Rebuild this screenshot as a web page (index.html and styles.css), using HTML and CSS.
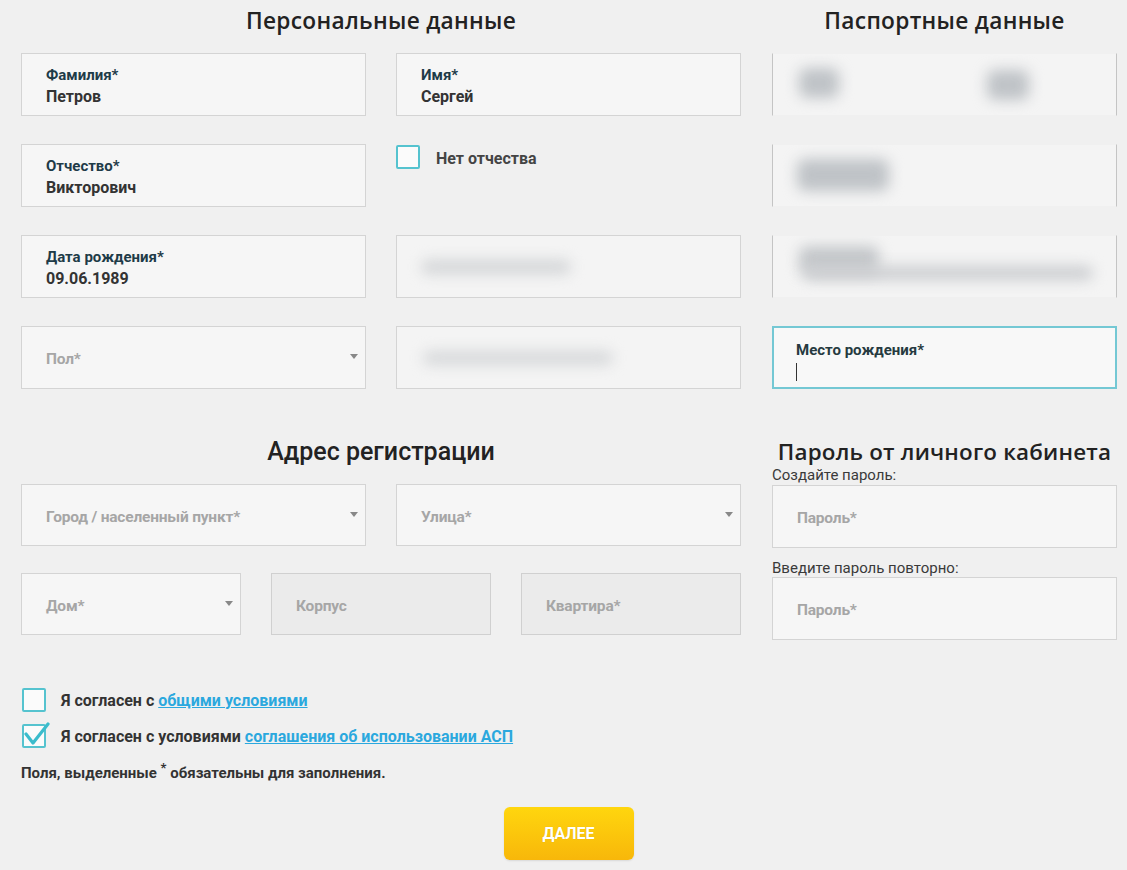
FILE: index.html
```html
<!DOCTYPE html>
<html lang="ru">
<head>
<meta charset="utf-8">
<title>Регистрация</title>
<link rel="stylesheet" href="styles.css">
</head>
<body>
<div class="page">
  <section class="row">
    <div class="left">
      <h2 class="title geo">Персональные данные</h2>
      <div class="grid2">
        <div class="field"><span class="lbl">Фамилия*</span><span class="val">Петров</span></div>
        <div class="field"><span class="lbl">Имя*</span><span class="val">Сергей</span></div>
        <div class="field"><span class="lbl">Отчество*</span><span class="val">Викторович</span></div>
        <div class="nocheck"><span class="box"></span><span class="nolbl">Нет отчества</span></div>
        <div class="field"><span class="lbl">Дата рождения*</span><span class="val">09.06.1989</span></div>
        <div class="field blurfield"><span class="blob b-mid1"></span></div>
        <div class="field select"><span class="ph">Пол*</span><span class="arrow"></span></div>
        <div class="field blurfield"><span class="blob b-mid2"></span></div>
      </div>
    </div>
    <div class="right">
      <h2 class="title geo">Паспортные данные</h2>
      <div class="col1">
        <div class="field pass"><span class="blob p1a"></span><span class="blob p1b"></span></div>
        <div class="field pass"><span class="blob p2a"></span></div>
        <div class="field pass"><span class="blob p3a"></span><span class="blob p3b"></span></div>
        <div class="field focus"><span class="lbl dark">Место рождения*</span><span class="caret"></span></div>
      </div>
    </div>
  </section>

  <section class="row second">
    <div class="left">
      <h2 class="title rob">Адрес регистрации</h2>
      <div class="grid2 addr">
        <div class="field select"><span class="ph">Город / населенный пункт*</span><span class="arrow"></span></div>
        <div class="field select"><span class="ph">Улица*</span><span class="arrow"></span></div>
      </div>
      <div class="grid3">
        <div class="field select"><span class="ph">Дом*</span><span class="arrow"></span></div>
        <div class="field disabled"><span class="ph">Корпус</span></div>
        <div class="field disabled"><span class="ph">Квартира*</span></div>
      </div>
    </div>
    <div class="right">
      <h2 class="title geo small">Пароль от личного кабинета</h2>
      <div class="hint">Создайте пароль:</div>
      <div class="field"><span class="ph">Пароль*</span></div>
      <div class="hint second-hint">Введите пароль повторно:</div>
      <div class="field"><span class="ph">Пароль*</span></div>
    </div>
  </section>

  <section class="agree">
    <div class="agree-row"><span class="box"></span><span class="agree-text">Я согласен с <a href="#">общими условиями</a></span></div>
    <div class="agree-row"><span class="box checked"><svg viewBox="0 0 28 28" width="28" height="28"><path d="M4 13 L11 22 L26 3" fill="none" stroke="#3bbccc" stroke-width="3.2" stroke-linecap="round" stroke-linejoin="round"/></svg></span><span class="agree-text">Я согласен с условиями <a href="#">соглашения об использовании АСП</a></span></div>
    <p class="note">Поля, выделенные <sup>*</sup> обязательны для заполнения.</p>
    <div class="btn-wrap"><button class="btn">ДАЛЕЕ</button></div>
  </section>
</div>
</body>
</html>
```

FILE: styles.css
```css
html, body {
  margin: 0;
  padding: 0;
  background: #f0f0f0;
}
body {
  font-family: Roboto, "Liberation Sans", Arial, sans-serif;
  color: #333;
}
.page {
  width: 1127px;
  height: 870px;
  overflow: hidden;
  padding-left: 21px;
  box-sizing: border-box;
}
.row {
  display: grid;
  grid-template-columns: 720px 345px;
  column-gap: 31px;
  align-items: start;
}
.title {
  margin: 6px 0 17px;
  height: 30px;
  line-height: 30px;
  text-align: center;
  color: #222;
}
.geo {
  font-family: "Open Sans", "Liberation Sans", sans-serif;
  font-weight: 600;
  font-size: 22.7px;
  letter-spacing: 0.3px;
}
.rob {
  font-family: Roboto, sans-serif;
  font-weight: 500;
  font-size: 25px;
}
.title.small {
  margin-bottom: 0;
  white-space: nowrap;
  font-size: 22.4px;
  letter-spacing: 0.2px;
}
.grid2 {
  display: grid;
  grid-template-columns: 345px 345px;
  column-gap: 30px;
  grid-auto-rows: 63px;
  row-gap: 28px;
}
.col1 {
  display: grid;
  grid-auto-rows: 63px;
  row-gap: 28px;
}
.field {
  position: relative;
  box-sizing: border-box;
  height: 63px;
  border: 1px solid #d4d4d4;
  background: #f6f6f6;
  padding: 3px 24px 0;
  display: flex;
  flex-direction: column;
  justify-content: center;
  overflow: hidden;
}
.lbl {
  font-weight: 700;
  font-size: 15px;
  line-height: 22px;
  color: #1e3b48;
}
.lbl.dark { color: #263a40; }
.val {
  font-weight: 700;
  font-size: 16px;
  line-height: 22px;
  color: #333;
}
.ph {
  font-weight: 700;
  font-size: 15.5px;
  color: #a6a6a6;
  letter-spacing: -0.2px;
}
.select .arrow {
  position: absolute;
  right: 7px;
  top: 27px;
  width: 0;
  height: 0;
  border-left: 4px solid transparent;
  border-right: 4px solid transparent;
  border-top: 5px solid #888;
}
.nocheck {
  display: flex;
  align-items: flex-start;
  gap: 16px;
  padding-top: 1px;
}
.box {
  display: inline-block;
  width: 24px;
  height: 24px;
  box-sizing: border-box;
  border: 2px solid #55c3cf;
  border-radius: 2px;
  background: #fbfbfb;
  position: relative;
  flex: none;
}
.nolbl {
  font-weight: 700;
  font-size: 16px;
  line-height: 26px;
  padding-top: 1px;
  color: #444;
}
.blurfield, .pass {
  background: #f4f4f4;
}
.pass {
  border-top-color: #f0f0f0;
  border-bottom-color: #f0f0f0;
  border-left-color: #c4c4c4;
  border-right-color: #c4c4c4;
}
.blob {
  position: absolute;
  background: #bfc3c7;
  filter: blur(7px);
  border-radius: 8px;
}
.b-mid1 { left: 24px; top: 24px; width: 150px; height: 14px; background: #d3d5d7; }
.b-mid2 { left: 26px; top: 24px; width: 190px; height: 14px; background: #d6d8da; }
.p1a { left: 26px; top: 14px; width: 40px; height: 30px; }
.p1b { left: 214px; top: 16px; width: 42px; height: 30px; }
.p2a { left: 24px; top: 14px; width: 92px; height: 32px; }
.p3a { left: 26px; top: 10px; width: 80px; height: 28px; background: #c4c7ca; }
.p3b { left: 30px; top: 30px; width: 290px; height: 14px; background: #cbcdd0; }
.focus {
  border: 2px solid #74c8d4;
  background: #f8f8f8;
  justify-content: flex-start;
  padding: 11px 22px 0;
}
.caret {
  display: block;
  width: 1px;
  height: 18px;
  background: #333;
  margin-top: 2px;
}
.second {
  margin-top: 42px;
}
.second .title.rob { margin-bottom: 17px; }
.addr { grid-auto-rows: 62px; }
.addr .field { height: 62px; }
.grid3 {
  margin-top: 27px;
  display: grid;
  grid-template-columns: 220px 220px 220px;
  column-gap: 30px;
}
.grid3 .field { height: 62px; }
.disabled {
  background: #ebebeb;
  border-color: #d0d0d0;
}
.hint {
  font-size: 15px;
  line-height: 16px;
  color: #3a3a3a;
  margin-bottom: 2px;
}
.second-hint {
  margin-top: 12px;
  margin-bottom: 1px;
}
.agree {
  margin-top: 48px;
}
.agree-row {
  display: flex;
  align-items: center;
  gap: 15px;
  height: 24px;
  margin-bottom: 12px;
  padding-left: 1px;
}
.box.checked svg {
  position: absolute;
  left: -2px;
  top: -5px;
}
.agree-text {
  font-weight: 700;
  font-size: 16px;
  color: #333;
}
.agree-text a {
  color: #2ba8de;
  text-decoration: underline;
}
.note {
  margin: 10px 0 0;
  font-weight: 700;
  font-size: 15px;
  color: #333;
}
.note sup { font-size: 13px; }
.btn-wrap {
  display: flex;
  justify-content: center;
  width: 1095px;
  margin-top: 25px;
}
.btn {
  width: 130px;
  height: 53px;
  border: none;
  border-radius: 6px;
  background: linear-gradient(#ffd60e, #f8b70a);
  color: #fff;
  font-family: Roboto, sans-serif;
  font-weight: 700;
  font-size: 16px;
  text-shadow: 0 0 1px rgba(0,0,0,0.15);
  box-shadow: 0 1px 2px rgba(0,0,0,0.1);
}
```
